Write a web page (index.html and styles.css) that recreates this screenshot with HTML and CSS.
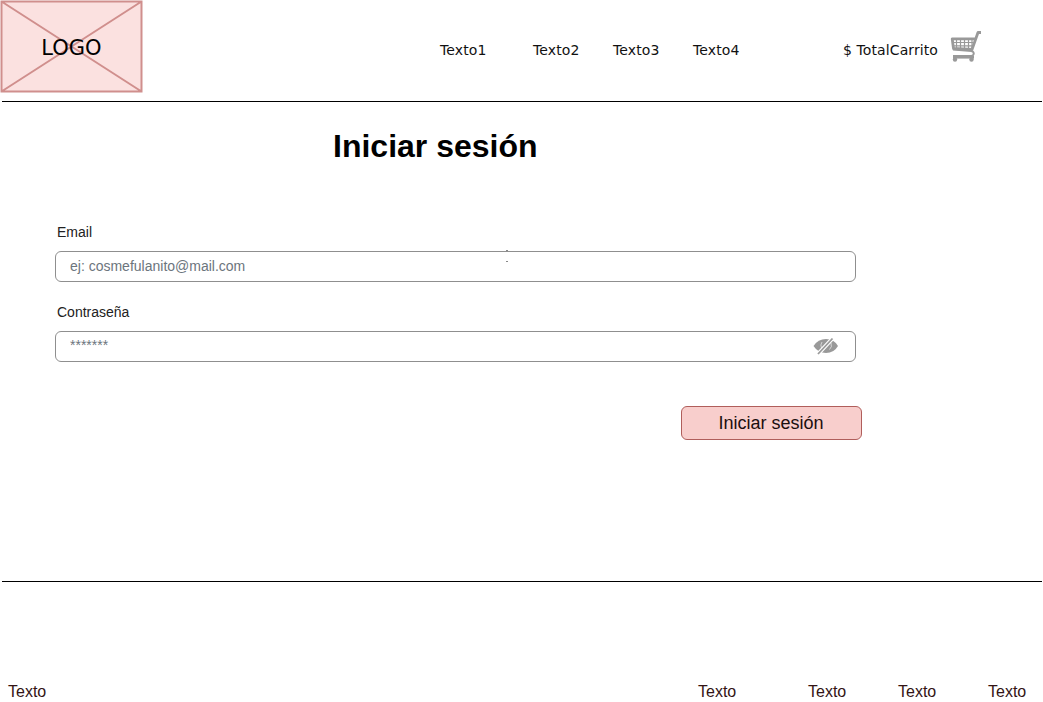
FILE: index.html
```html
<!DOCTYPE html>
<html lang="es">
<head>
<meta charset="utf-8">
<title>Iniciar sesión</title>
<link rel="stylesheet" href="styles.css">
</head>
<body>
<header class="header">
  <div class="logo">
    <svg class="logo-frame" viewBox="0 0 143 93"><path d="M1.500 1.500H141.500V91.500H1.500ZL141.500 91.500M141.500 1.500L1.500 91.500"/></svg>
    <span class="logo-text">LOGO</span>
  </div>
  <nav class="nav">
    <a class="nav-link nav-first">Texto1</a>
    <a class="nav-link">Texto2</a>
    <a class="nav-link">Texto3</a>
    <a class="nav-link">Texto4</a>
  </nav>
  <div class="cart">
    <span class="nav-link cart-total">$ TotalCarrito</span>
    <svg class="cart-icon" viewBox="0 0 32 32" fill="none" stroke="#999">
      <path stroke-width="2.800" stroke-linejoin="round" d="M31 2.500H28L22 19.500L3.500 18.500L2.200 8.800H25"/>
      <path stroke-width="2" d="M3 19.500L21.500 21Q24.500 22 23.500 24.500Q23 26 21 26H3"/>
      <path stroke-width="1.200" d="M6.500 8V19M10.500 8V19M14.500 8V19M18.500 8V20M22 8V18M2 12.500H23M2 15.800H22"/>
      <path stroke-width="2.600" d="M3 27.300H24"/>
      <circle cx="5" cy="29.500" r="2.200" fill="#999" stroke="none"/>
      <circle cx="21.500" cy="29.500" r="2.200" fill="#999" stroke="none"/>
    </svg>
  </div>
</header>
<main class="main">
  <h1 class="title">Iniciar sesión</h1>
  <form class="form">
    <label class="label" for="email">Email</label>
    <div class="field">
      <input class="input" id="email" type="text" placeholder="ej: cosmefulanito@mail.com">
      <i class="mark mark-top"></i><i class="mark mark-bottom"></i>
    </div>
    <label class="label" for="password">Contraseña</label>
    <div class="field">
      <input class="input input-password" id="password" type="password" placeholder="*******">
      <svg class="eye" viewBox="0 0 26 18">
        <path fill="#999" d="M.5 9Q5 2 13 2T25 9Q21 16 13 16T.5 9Z"/>
        <path fill="none" stroke="#fff" stroke-width=".6" d="M9 5Q7 8 8.500 11M18 6Q19.500 10 16.500 12.500"/>
        <path stroke="#fff" stroke-width="4" d="M4 18L21 0"/>
        <path stroke="#999" stroke-width="1.800" d="M5 17L19.500 1.500"/>
      </svg>
    </div>
    <button class="submit" type="button">Iniciar sesión</button>
  </form>
</main>
<footer class="footer">
  <a class="foot-link foot-first">Texto</a>
  <a class="foot-link foot-second">Texto</a>
  <a class="foot-link">Texto</a>
  <a class="foot-link">Texto</a>
  <a class="foot-link">Texto</a>
</footer>
</body>
</html>
```

FILE: styles.css
```css
* { box-sizing: border-box; }
body {
  margin: 0;
  height: 702px;
  display: flex;
  flex-direction: column;
  overflow: hidden;
  background: #fff;
  font-family: "Liberation Sans", Arial, sans-serif;
}
.header {
  height: 102px;
  margin: 0 1px 0 2px;
  border-bottom: 1px solid #000;
  display: flex;
  align-items: flex-start;
  flex: none;
}
.logo {
  width: 143px;
  height: 93px;
  margin-left: -2px;
  display: grid;
  place-items: center;
}
.logo-frame {
  grid-area: 1 / 1;
  width: 143px;
  height: 93px;
  fill: #fbe1e0;
  stroke: #d08f8d;
  stroke-width: 2;
}
.logo-text {
  grid-area: 1 / 1;
  padding-top: 3px;
  font: 21px/24px "DejaVu Sans", sans-serif;
  z-index: 1;
}
.nav {
  display: flex;
  gap: 34px;
  margin: 40px 0 0 297px;
}
.nav-link {
  width: 46px;
  font: 14px/20px "DejaVu Sans", sans-serif;
  letter-spacing: 0.100px;
  color: #111;
  white-space: nowrap;
}
.nav-first { margin-right: 13px; }
.cart {
  display: flex;
  margin: 30px 0 0 104px;
}
.cart-total { width: 107px; padding-top: 10px; }
.cart-icon { width: 32px; height: 32px; }
.main {
  height: 480px;
  margin: 0 1px 0 2px;
  border-bottom: 1px solid #000;
  flex: none;
}
.title {
  margin: 26px 0 0 331px;
  font-size: 32px;
  line-height: 36px;
}
.form {
  width: 807px;
  margin: 58px 0 0 53px;
  display: flex;
  flex-direction: column;
}
.label {
  height: 29px;
  padding: 0 0 0 2px;
  font-size: 14px;
  line-height: 20px;
  color: #222;
}
.field {
  position: relative;
  width: 801px;
  height: 31px;
  margin-bottom: 20px;
}
.input {
  display: block;
  width: 801px;
  height: 31px;
  padding: 0 14px 2px;
  border: 1px solid #8f8f8f;
  border-radius: 6px;
  background: #fff;
  font: 14px "Liberation Sans", Arial, sans-serif;
}
.input-password { padding-bottom: 3px; }
.input::placeholder { color: #6c757d; opacity: 1; }
.eye {
  position: absolute;
  left: 758px;
  top: 6px;
  width: 26px;
  height: 18px;
}
.mark {
  position: absolute;
  left: 451px;
  width: 2px;
  height: 1px;
  background: #888;
}
.mark-top { top: -1px; }
.mark-bottom { top: 10px; }
.submit {
  align-self: flex-end;
  width: 181px;
  height: 34px;
  margin-top: 24px;
  padding: 0 1px 0 0;
  border: 1px solid #b05e5b;
  border-radius: 6px;
  background: #f8cecc;
  color: #1b0f0f;
  font: 18px "Liberation Sans", Arial, sans-serif;
}
.footer {
  display: flex;
  gap: 52px;
  padding: 100px 0 0 8px;
}
.foot-link {
  width: 38px;
  font-size: 16px;
  line-height: 20px;
  color: #331414;
}
.foot-first { margin-right: 600px; }
.foot-second { margin-right: 20px; }
```
